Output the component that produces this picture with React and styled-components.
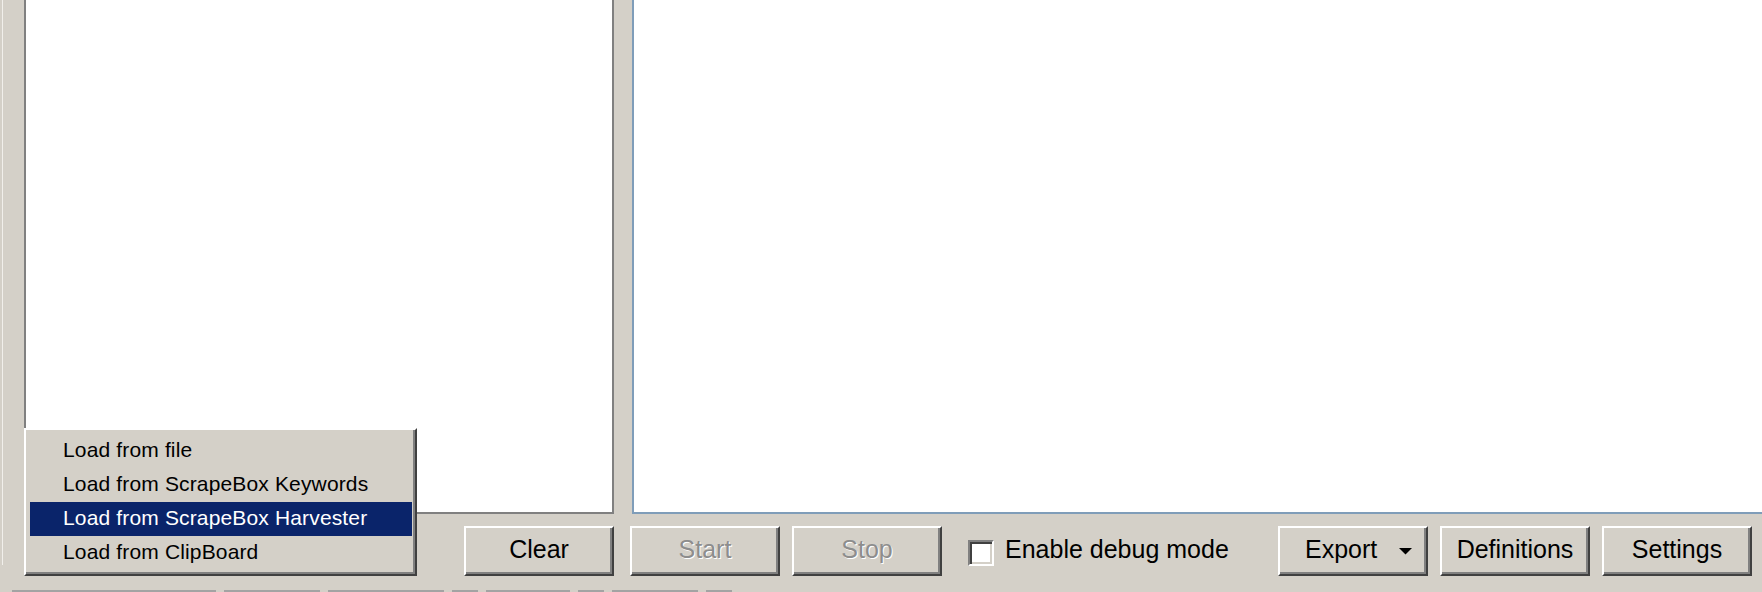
import React from 'react';
import styled, { createGlobalStyle } from 'styled-components';

const GlobalStyle = createGlobalStyle`
  html, body { margin: 0; padding: 0; background: #d4d0c8; }
  body { font-family: "Liberation Sans", Arial, sans-serif; }
  * { box-sizing: border-box; }
`;

const Window = styled.div`
  position: relative;
  width: 1762px;
  height: 592px;
  overflow: hidden;
  display: flex;
  background: #d4d0c8;
`;

const LeftEdge = styled.div`
  width: 3px;
  flex: none;
  display: flex;
  flex-direction: column;
  align-items: flex-end;
`;

const EdgeLine = styled.div`
  width: 1px;
  height: 565px;
  background: #f1efeb;
`;

const Main = styled.div`
  flex: 1;
  min-width: 0;
  display: flex;
  flex-direction: column;
`;

const PanelsRow = styled.div`
  display: flex;
  gap: 18px;
  height: 514px;
  padding-left: 21px;
  flex: none;
`;

const ListPanel = styled.div`
  width: 590px;
  flex: none;
  background: #fff;
  border: 2px solid #808080;
  border-top: none;
`;

const OutputPanel = styled.div`
  flex: 1;
  background: #fff;
  border-left: 2px solid #7f9db9;
  border-bottom: 2px solid #7f9db9;
`;

const ButtonRow = styled.div`
  display: flex;
  align-items: center;
  height: 50px;
  margin-top: 12px;
  padding: 0 10px 0 21px;
  flex: none;
`;

const Button = styled.button`
  width: 150px;
  height: 50px;
  flex: none;
  margin-left: ${(p) => (p.$ml === 'auto' ? 'auto' : `${p.$ml || 0}px`)};
  padding: ${(p) => (p.$split ? '0 14px 3px 25px' : '0 0 3px 0')};
  display: flex;
  align-items: center;
  justify-content: ${(p) => (p.$split ? 'space-between' : 'center')};
  background: #d4d0c8;
  border: 2px solid;
  border-color: #ffffff #404040 #404040 #ffffff;
  box-shadow: inset -2px -2px 0 #808080;
  font-family: "Liberation Sans", Arial, sans-serif;
  font-size: 25px;
  color: #000;
  cursor: default;
  &:disabled {
    color: #8d8d8d;
    text-shadow: 1px 1px 0 #ffffff;
  }
`;

const ArrowWrap = styled.span`
  display: flex;
  margin-top: 3px;
`;

const CheckGroup = styled.label`
  display: flex;
  align-items: center;
  margin-left: 26px;
  margin-bottom: 3px;
  font-size: 25px;
  color: #000;
`;

const CheckBox = styled.span`
  width: 26px;
  height: 26px;
  margin-top: 7px;
  margin-right: 11px;
  flex: none;
  background: #fff;
  border: 2px solid;
  border-color: #808080 #ffffff #ffffff #808080;
  box-shadow: inset 2px 2px 0 #404040, inset -2px -2px 0 #d4d0c8;
`;

const StatusRow = styled.div`
  display: flex;
  gap: 8px;
  margin-top: 14px;
  padding-left: 9px;
  height: 2px;
  flex: none;
`;

const StatusCell = styled.div`
  width: ${(p) => p.$w}px;
  height: 2px;
  background: #a3a3a3;
`;

const Menu = styled.div`
  position: absolute;
  left: 24px;
  top: 428px;
  width: 393px;
  height: 148px;
  padding: 4px 3px 4px 4px;
  background: #d4d0c8;
  border: 2px solid;
  border-color: #ffffff #404040 #404040 #ffffff;
  box-shadow: inset -2px -2px 0 #808080;
  display: flex;
  flex-direction: column;
`;

const MenuItem = styled.div`
  height: 34px;
  line-height: 32px;
  padding: 0 0 2px 33px;
  font-family: "Liberation Sans", Arial, sans-serif;
  font-size: 21px;
  letter-spacing: 0.15px;
  white-space: nowrap;
  color: ${(p) => (p.$active ? '#ffffff' : '#000000')};
  background: ${(p) => (p.$active ? '#0a246a' : 'transparent')};
`;

const Arrow = () => (
  <svg width="13" height="7" viewBox="0 0 13 7" aria-hidden="true">
    <polygon points="0,0 13,0 6.5,6.5" fill="#000" />
  </svg>
);

const statusCells = [204, 96, 116, 26, 84, 26, 86, 26];

const menuItems = [
  'Load from file',
  'Load from ScrapeBox Keywords',
  'Load from ScrapeBox Harvester',
  'Load from ClipBoard',
];

export default function App() {
  return (
    <>
      <GlobalStyle />
      <Window>
        <LeftEdge>
          <EdgeLine />
        </LeftEdge>
        <Main>
          <PanelsRow>
            <ListPanel />
            <OutputPanel />
          </PanelsRow>
          <ButtonRow>
            <Button $ml={440}>Clear</Button>
            <Button $ml={16} disabled>Start</Button>
            <Button $ml={12} disabled>Stop</Button>
            <CheckGroup>
              <CheckBox />
              Enable debug mode
            </CheckGroup>
            <Button $ml="auto" $split>
              <span>Export</span>
              <ArrowWrap>
                <Arrow />
              </ArrowWrap>
            </Button>
            <Button $ml={12}>Definitions</Button>
            <Button $ml={12}>Settings</Button>
          </ButtonRow>
          <StatusRow>
            {statusCells.map((w, i) => (
              <StatusCell key={i} $w={w} />
            ))}
          </StatusRow>
        </Main>
        <Menu>
          {menuItems.map((t, i) => (
            <MenuItem key={t} $active={i === 2}>
              {t}
            </MenuItem>
          ))}
        </Menu>
      </Window>
    </>
  );
}
